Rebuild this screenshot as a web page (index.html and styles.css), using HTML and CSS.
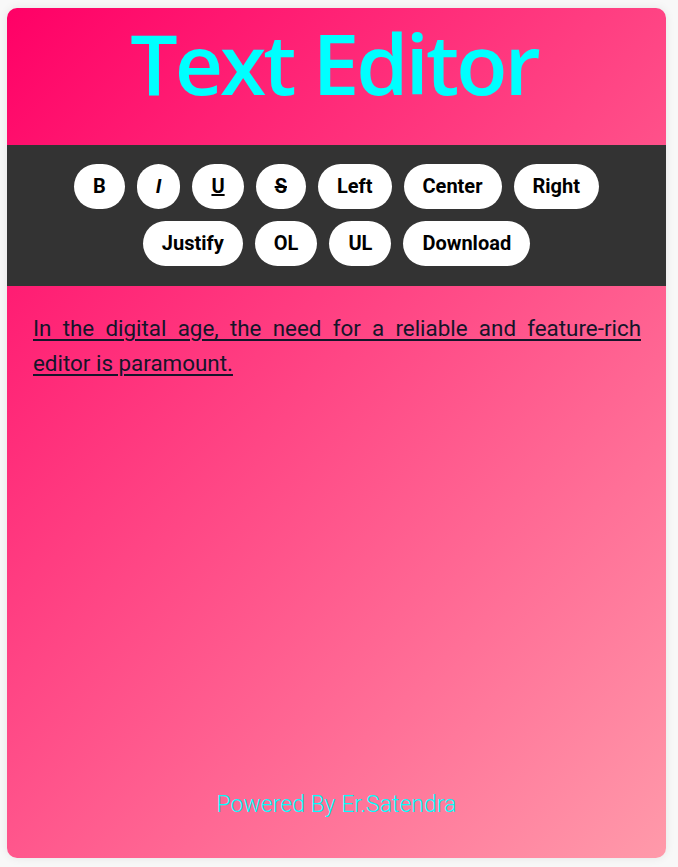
FILE: index.html
```html
<!DOCTYPE html>
<html lang="en">
<head>
<meta charset="UTF-8">
<title>Text Editor</title>
<link rel="stylesheet" href="styles.css">
</head>
<body>
<div class="card">
  <header class="header">
    <h1 class="title">Text Editor</h1>
  </header>
  <nav class="toolbar">
    <button class="btn"><b>B</b></button>
    <button class="btn"><i>I</i></button>
    <button class="btn"><u>U</u></button>
    <button class="btn"><s>S</s></button>
    <button class="btn">Left</button>
    <button class="btn">Center</button>
    <button class="btn">Right</button>
    <button class="btn">Justify</button>
    <button class="btn">OL</button>
    <button class="btn">UL</button>
    <button class="btn">Download</button>
  </nav>
  <main class="content">
    <p class="text">In the digital age, the need for a reliable and feature-rich editor is paramount.</p>
  </main>
  <footer class="footer">Powered By Er.Satendra</footer>
</div>
</body>
</html>
```
FILE: styles.css
```css
html, body {
  margin: 0;
  height: 100%;
}
body {
  background: #f8f8f8;
  font-family: Roboto, "Liberation Sans", sans-serif;
  padding: 8px 12px 9px 7px;
  box-sizing: border-box;
}
.card {
  height: 100%;
  border-radius: 10px;
  background: linear-gradient(135deg, #ff0066 0%, #ff9aaa 100%);
  box-shadow: 0 0 10px rgba(0, 0, 0, 0.08);
  display: flex;
  flex-direction: column;
}
.header {
  height: 137px;
  display: flex;
  justify-content: center;
  align-items: flex-start;
}
.title {
  margin: 0;
  padding: 0 5px 0 0;
  font-family: "Open Sans", sans-serif;
  font-weight: 600;
  font-size: 84px;
  line-height: 110px;
  letter-spacing: -3px;
  color: #00ffff;
}
.toolbar {
  background: #333333;
  padding: 19px 20px 20px;
  display: flex;
  flex-wrap: wrap;
  justify-content: center;
  gap: 12px 12px;
}
.btn {
  border: none;
  background: #ffffff;
  color: #000000;
  border-radius: 24px;
  font-family: Roboto, sans-serif;
  font-weight: 700;
  font-size: 20px;
  line-height: 23px;
  padding: 11px 19px;
  cursor: pointer;
}
.btn b, .btn i, .btn u, .btn s {
  font-weight: 700;
}
.content {
  flex: 1;
  padding: 25px 25px 0 26px;
}
.text {
  margin: 0;
  font-size: 22.4px;
  line-height: 35px;
  text-align: justify;
  text-decoration: underline;
  text-decoration-thickness: 2px;
  text-underline-offset: 3px;
  color: #15152a;
}
.footer {
  text-align: center;
  color: #00ffff;
  font-weight: 300;
  font-size: 23px;
  line-height: 27px;
  padding-bottom: 40px;
}
```
